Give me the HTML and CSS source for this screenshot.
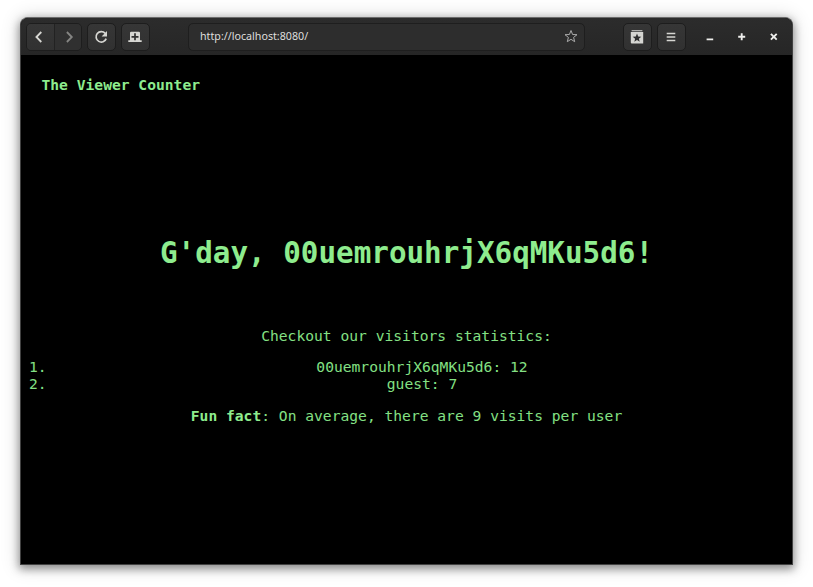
FILE: index.html
```html
<!DOCTYPE html>
<html lang="en">
<head>
<meta charset="utf-8">
<title>The Viewer Counter</title>
<link rel="stylesheet" href="styles.css">
</head>
<body>
<div class="window">
  <header class="toolbar">
    <div class="group">
      <button class="btn back" aria-label="Back"><svg width="16" height="16" viewBox="0 0 16 16"><path d="M10.3 3 5.4 8l4.9 5" fill="none" stroke="#d6d6d2" stroke-width="1.8"/></svg></button>
      <button class="btn forward" aria-label="Forward"><svg width="16" height="16" viewBox="0 0 16 16"><path d="m5.9 3 4.9 5-4.9 5" fill="none" stroke="#858583" stroke-width="1.8"/></svg></button>
    </div>
    <button class="btn single reload" aria-label="Reload"><svg width="16" height="16" viewBox="0 0 16 16"><path d="M12.2 4.4A5.2 5.2 0 1 0 13.2 9.6" fill="none" stroke="#d6d6d2" stroke-width="1.7"/><path d="M14 2v5.4H8.6z" fill="#d6d6d2"/></svg></button>
    <button class="btn single newtab" aria-label="New tab"><svg width="16" height="16" viewBox="0 0 16 16"><path d="M3 4Q3 2.8 4.2 2.8h7.6Q13 2.8 13 4v7.2h1.7V13H1.3v-1.8H3z" fill="#d6d6d2"/><path d="M8 4.3v7M4.5 7.8h7" stroke="#303030" stroke-width="1.7"/></svg></button>
    <div class="address">
      <span>http://localhost:8080/</span>
      <svg width="14" height="14" viewBox="0 0 14 14"><path d="m7 1.5 1.6 4 4.4.2-3.4 2.7 1.1 4.3L7 10.3l-3.7 2.4 1.1-4.3L1 5.7l4.4-.2z" fill="none" stroke="#aaa" stroke-width="1"/></svg>
    </div>
    <button class="btn single bookmarks" aria-label="Bookmarks"><svg width="16" height="16" viewBox="0 0 16 16"><path d="M2.6 1.2h10.8v1.1H2.6zM1.8 3.1h12.4v11.3H2.8q-1 0-1-1z" fill="#d6d6d2"/><path d="m8 4.6 1.2 3 3.1.1-2.4 2 .8 3L8 11l-2.7 1.7.8-3-2.4-2 3.1-.1z" fill="#303030"/></svg></button>
    <button class="btn single menu" aria-label="Menu"><svg width="16" height="16" viewBox="0 0 16 16"><path d="M3.7 4.5h8.6M3.7 8h8.6M3.7 11.5h8.6" stroke="#d6d6d2" stroke-width="1.6"/></svg></button>
    <div class="controls">
      <svg width="16" height="16" viewBox="0 0 16 16"><path d="M4.6 10.4h6.6" stroke="#eeeeec" stroke-width="1.9"/></svg>
      <svg width="16" height="16" viewBox="0 0 16 16"><path d="M7.7 4.3v7M4.2 7.8h7" stroke="#eeeeec" stroke-width="1.9"/></svg>
      <svg width="16" height="16" viewBox="0 0 16 16"><path d="m4.9 4.9 5.8 5.8m0-5.8-5.8 5.8" stroke="#eeeeec" stroke-width="1.9"/></svg>
    </div>
  </header>
  <main class="page">
    <div class="brand">The Viewer Counter</div>
    <h1>G'day, 00uemrouhrjX6qMKu5d6!</h1>
    <p class="intro">Checkout our visitors statistics:</p>
    <ol>
      <li><span class="num">1.</span><span class="entry">00uemrouhrjX6qMKu5d6: 12</span></li>
      <li><span class="num">2.</span><span class="entry">guest: 7</span></li>
    </ol>
    <p class="fact"><b>Fun fact</b>: On average, there are 9 visits per user</p>
  </main>
</div>
</body>
</html>
```
FILE: styles.css
```css
* { box-sizing: border-box; }
body { margin: 0; height: 587px; overflow: hidden; background: #fff; padding: 17px 20px 22px; }
.window {
  height: 548px;
  border: 1px solid #414141;
  border-top-color: #6c6c6c;
  border-radius: 8px 8px 0 0;
  background: #000;
  overflow: hidden;
  box-shadow: 0 3px 9px 1px rgba(0, 0, 0, .4), 0 1px 18px 3px rgba(0, 0, 0, .12);
}
.toolbar {
  height: 37px;
  display: flex;
  align-items: center;
  padding: 0 10px 0 5px;
  background: linear-gradient(#2c2c2c, #262626);
}
.group { display: flex; border: 1px solid #1d1d1d; border-radius: 5px; overflow: hidden; }
.btn {
  width: 27px;
  height: 26px;
  padding: 0;
  border: 0;
  display: flex;
  align-items: center;
  justify-content: center;
  background: linear-gradient(#363636, #313131);
}
.back { padding-right: 3px; }
.forward { border-left: 1px solid #222; padding-left: 2px; background: #303030; }
.single { width: 29px; height: 28px; border: 1px solid #1d1d1d; border-radius: 5px; }
.reload, .newtab { margin-left: 5px; padding-right: 1px; }
.address {
  margin-left: 38px;
  width: 397px;
  height: 28px;
  border: 1px solid #1e1e1e;
  border-radius: 5px;
  background: #2d2d2d;
  display: flex;
  align-items: center;
  justify-content: space-between;
  padding: 0 6px 1px 11px;
  font: 10.7px "Noto Sans", sans-serif;
  color: #dededc;
}
.bookmarks { margin-left: 38px; padding-right: 1px; }
.menu { margin-left: 5px; padding-right: 1px; }
.controls { display: flex; gap: 16px; margin-left: auto; }
.page {
  padding: 21px 8px 0;
  text-align: center;
  font: 14.63px/17px "DejaVu Sans Mono", monospace;
  color: #84e084;
}
b, .brand, h1 { color: #8eec8e; }
.brand { text-align: left; font-weight: bold; padding-left: 12.5px; }
h1 { margin: 143px 0 0; font-size: 29.26px; line-height: 34px; }
.intro { margin: 57px 0 14px; }
ol { margin: 0; padding: 0; list-style: none; }
li { display: flex; }
.num { width: 31px; text-align: left; }
.entry { flex: 1; }
.fact { margin: 15px 0 0; }
```
